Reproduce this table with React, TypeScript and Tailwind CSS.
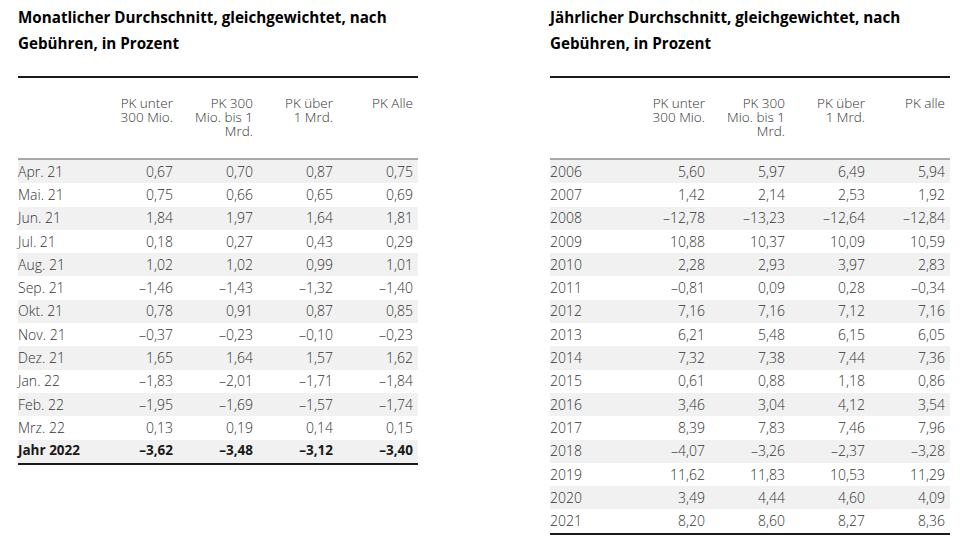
const MONTHLY: [string, string[]][] = [
  ["Apr. 21", ["0,67", "0,70", "0,87", "0,75"]],
  ["Mai. 21", ["0,75", "0,66", "0,65", "0,69"]],
  ["Jun. 21", ["1,84", "1,97", "1,64", "1,81"]],
  ["Jul. 21", ["0,18", "0,27", "0,43", "0,29"]],
  ["Aug. 21", ["1,02", "1,02", "0,99", "1,01"]],
  ["Sep. 21", ["–1,46", "–1,43", "–1,32", "–1,40"]],
  ["Okt. 21", ["0,78", "0,91", "0,87", "0,85"]],
  ["Nov. 21", ["–0,37", "–0,23", "–0,10", "–0,23"]],
  ["Dez. 21", ["1,65", "1,64", "1,57", "1,62"]],
  ["Jan. 22", ["–1,83", "–2,01", "–1,71", "–1,84"]],
  ["Feb. 22", ["–1,95", "–1,69", "–1,57", "–1,74"]],
  ["Mrz. 22", ["0,13", "0,19", "0,14", "0,15"]],
];

const YEARLY: [string, string[]][] = [
  ["2006", ["5,60", "5,97", "6,49", "5,94"]],
  ["2007", ["1,42", "2,14", "2,53", "1,92"]],
  ["2008", ["–12,78", "–13,23", "–12,64", "–12,84"]],
  ["2009", ["10,88", "10,37", "10,09", "10,59"]],
  ["2010", ["2,28", "2,93", "3,97", "2,83"]],
  ["2011", ["–0,81", "0,09", "0,28", "–0,34"]],
  ["2012", ["7,16", "7,16", "7,12", "7,16"]],
  ["2013", ["6,21", "5,48", "6,15", "6,05"]],
  ["2014", ["7,32", "7,38", "7,44", "7,36"]],
  ["2015", ["0,61", "0,88", "1,18", "0,86"]],
  ["2016", ["3,46", "3,04", "4,12", "3,54"]],
  ["2017", ["8,39", "7,83", "7,46", "7,96"]],
  ["2018", ["–4,07", "–3,26", "–2,37", "–3,28"]],
  ["2019", ["11,62", "11,83", "10,53", "11,29"]],
  ["2020", ["3,49", "4,44", "4,60", "4,09"]],
  ["2021", ["8,20", "8,60", "8,27", "8,36"]],
];

const COLS = "grid grid-cols-[75px_80px_80px_80px_80px] pr-[5px]";

function Row({ label, values, shaded, bold }: { label: string; values: string[]; shaded: boolean; bold?: boolean }) {
  return (
    <div
      className={`${COLS} h-[23.3px] items-center leading-none ${shaded ? "bg-[#f1f1f1]" : ""} ${
        bold ? "text-[13.5px] font-bold text-[#1a1a1a]" : "text-[14px] font-light text-[#333333]"
      }`}
    >
      <span>{label}</span>
      {values.map((v, i) => (
        <span key={i} className="text-right">
          {v}
        </span>
      ))}
    </div>
  );
}

function Table({
  title,
  last,
  rows,
  total,
}: {
  title: string[];
  last: string;
  rows: [string, string[]][];
  total?: [string, string[]];
}) {
  const all = total ? [...rows, total] : rows;
  return (
    <div className="w-[400px]">
      <h2 className="h-[59px] pt-[4px] text-[15.2px] font-bold leading-[26px] text-black">
        {title[0]}
        <br />
        {title[1]}
      </h2>
      <div className="mt-[17px] border-t-2 border-[#1a1a1a]">
        <div className={`${COLS} h-[80px] pt-[18px] text-[13.5px] font-light leading-[14px] text-[#333333]`}>
          <span />
          <span className="text-right">
            PK unter
            <br />
            300 Mio.
          </span>
          <span className="text-right">
            PK 300
            <br />
            Mio. bis 1
            <br />
            Mrd.
          </span>
          <span className="text-right">
            PK über
            <br />
            1 Mrd.
          </span>
          <span className="text-right">{last}</span>
        </div>
        <div className="border-t-2 border-[#a8a8a8]">
          {all.map(([label, values], i) => (
            <Row
              key={label}
              label={label}
              values={values}
              shaded={i % 2 === 0}
              bold={total !== undefined && i === all.length - 1}
            />
          ))}
        </div>
        <div className="border-t-2 border-[#1a1a1a]" />
      </div>
    </div>
  );
}

export default function App() {
  return (
    <div className="flex h-[548px] w-[960px] gap-[132px] bg-white pl-[18px] font-['Open_Sans',sans-serif]">
      <Table
        title={["Monatlicher Durchschnitt, gleichgewichtet, nach", "Gebühren, in Prozent"]}
        last="PK Alle"
        rows={MONTHLY}
        total={["Jahr 2022", ["–3,62", "–3,48", "–3,12", "–3,40"]]}
      />
      <Table
        title={["Jährlicher Durchschnitt, gleichgewichtet, nach", "Gebühren, in Prozent"]}
        last="PK alle"
        rows={YEARLY}
      />
    </div>
  );
}
